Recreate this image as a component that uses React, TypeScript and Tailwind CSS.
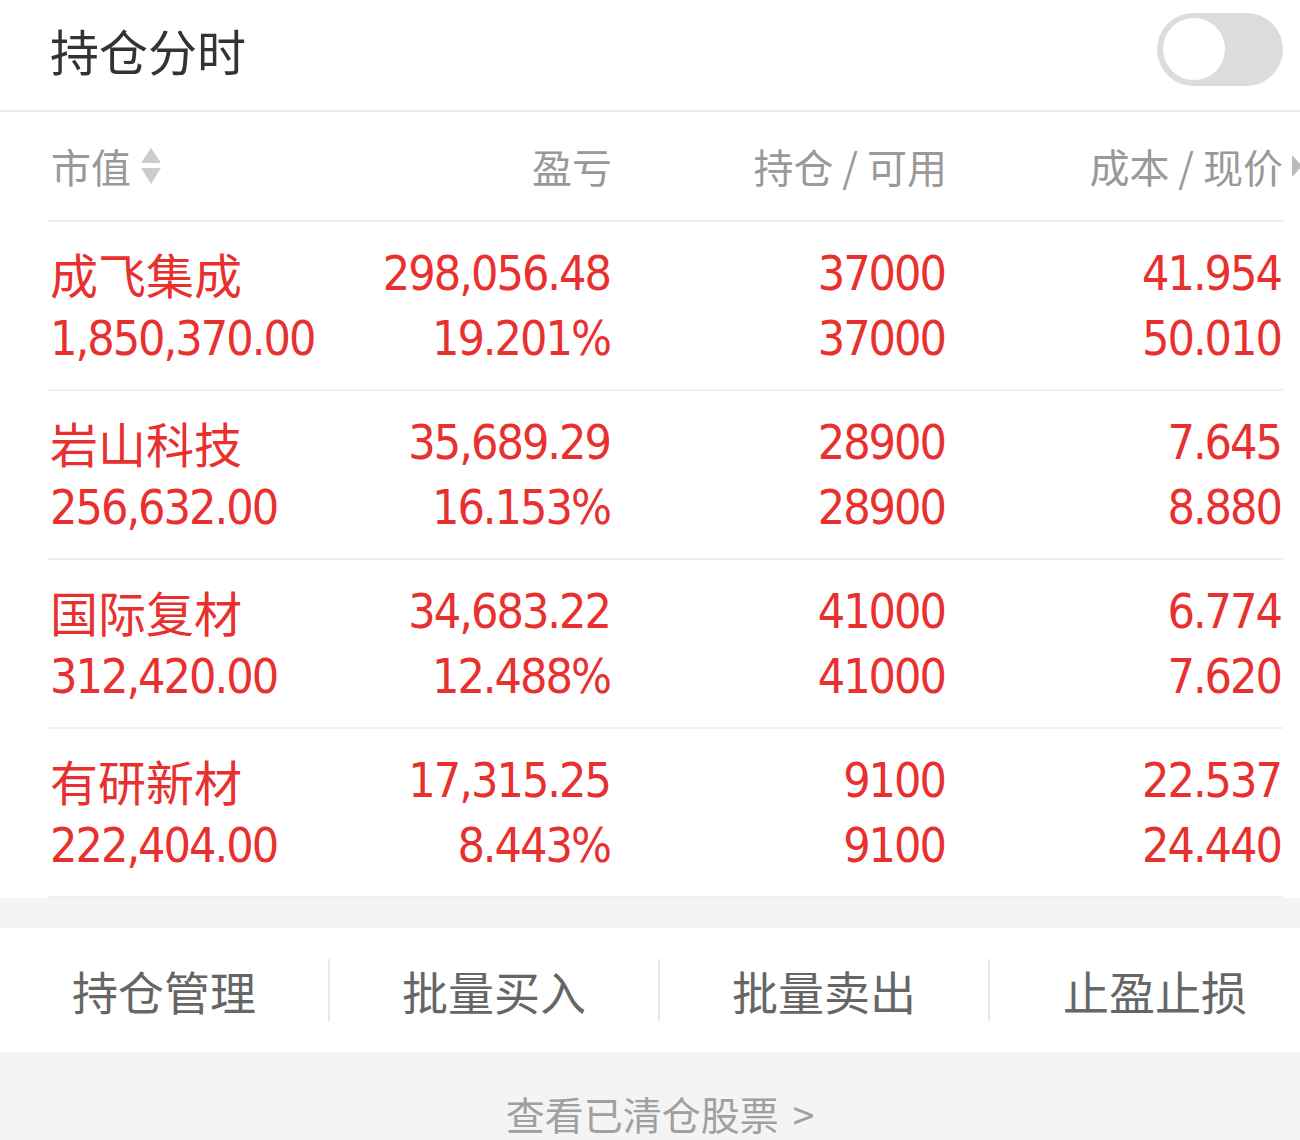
import React from "react";

const rows = [
  { name: "成飞集成", mv: "1,850,370.00", pl: "298,056.48", pct: "19.201%", hold: "37000", avail: "37000", cost: "41.954", price: "50.010" },
  { name: "岩山科技", mv: "256,632.00", pl: "35,689.29", pct: "16.153%", hold: "28900", avail: "28900", cost: "7.645", price: "8.880" },
  { name: "国际复材", mv: "312,420.00", pl: "34,683.22", pct: "12.488%", hold: "41000", avail: "41000", cost: "6.774", price: "7.620" },
  { name: "有研新材", mv: "222,404.00", pl: "17,315.25", pct: "8.443%", hold: "9100", avail: "9100", cost: "22.537", price: "24.440" },
];

const cjk = { fontFamily: '"Noto Sans CJK SC", "Noto Sans", sans-serif' };
const num = { fontFamily: '"DejaVu Sans Condensed", Roboto, sans-serif' };

export default function App() {
  return (
    <div className="w-[1300px] h-[1140px] bg-white flex flex-col overflow-hidden" style={cjk}>
      {/* header */}
      <div className="h-[112px] shrink-0 flex items-center justify-between pl-[50px] pr-[17px] pb-[12px] border-b-2 border-[#e8e8e8]">
        <span className="text-[49px] text-[#333333] leading-none">持仓分时</span>
        <div className="w-[126px] h-[73px] rounded-full bg-[#dcdcdc] flex items-center pl-[6px]">
          <div className="w-[62px] h-[62px] rounded-full bg-white" />
        </div>
      </div>

      {/* table */}
      <div className="ml-[48px] mr-[17px] flex flex-col">
        <div className="h-[110px] grid grid-cols-[302px_262px_335px_1fr] items-center border-b-2 border-[#f0f0f0] text-[40px] text-[#999999] leading-none">
          <div className="flex items-center pl-[3px]">
            <span>市值</span>
            <svg width="22" height="40" viewBox="0 0 22 40" className="ml-[9px]">
              <path d="M11 2 L21 17 L1 17 Z" fill="#cccccc" />
              <path d="M1 22 L21 22 L11 38 Z" fill="#cccccc" />
            </svg>
          </div>
          <div className="text-right">盈亏</div>
          <div className="text-right">持仓 / 可用</div>
          <div className="text-right relative">
            成本 / 现价
            <svg width="12" height="24" viewBox="0 0 12 24" className="absolute right-[-20px] top-[8px]">
              <path d="M1 1 L11 12 L1 23 Z" fill="#bbbbbb" />
            </svg>
          </div>
        </div>

        {rows.map((r) => (
          <div
            key={r.name}
            className="h-[169px] grid grid-cols-[302px_262px_335px_1fr] pt-[19px] border-b-2 border-[#f0f0f0] text-[#e8302e] leading-[65px]"
          >
            <div className="flex flex-col pl-[2px]">
              <span className="text-[48px]" style={cjk}>{r.name}</span>
              <span className="text-[48px] tracking-[-2px]" style={num}>{r.mv}</span>
            </div>
            <div className="flex flex-col items-end pr-[2px] text-[48px] tracking-[-2px]" style={num}>
              <span>{r.pl}</span>
              <span>{r.pct}</span>
            </div>
            <div className="flex flex-col items-end pr-[2px] text-[48px] tracking-[-2px]" style={num}>
              <span>{r.hold}</span>
              <span>{r.avail}</span>
            </div>
            <div className="flex flex-col items-end pr-[2px] text-[48px] tracking-[-2px]" style={num}>
              <span>{r.cost}</span>
              <span>{r.price}</span>
            </div>
          </div>
        ))}
      </div>

      <div className="h-[30px] shrink-0 bg-[#f4f4f4]" />

      {/* buttons */}
      <div className="h-[124px] shrink-0 bg-white grid grid-cols-[330px_330px_330px_330px] items-center text-[46px] text-[#666666] leading-none">
        {["持仓管理", "批量买入", "批量卖出", "止盈止损"].map((t, i) => (
          <div
            key={t}
            className={
              "h-[62px] flex items-center justify-center " +
              (i < 3 ? "border-r-2 border-[#e8e8e8]" : "")
            }
          >
            {t}
          </div>
        ))}
      </div>

      {/* footer */}
      <div className="flex-1 bg-[#f4f4f4] flex justify-center pt-[42px] pl-[20px]">
        <span className="text-[39px] text-[#a0a0a0] leading-none">
          查看已清仓股票<span className="ml-[14px]">&gt;</span>
        </span>
      </div>
    </div>
  );
}
